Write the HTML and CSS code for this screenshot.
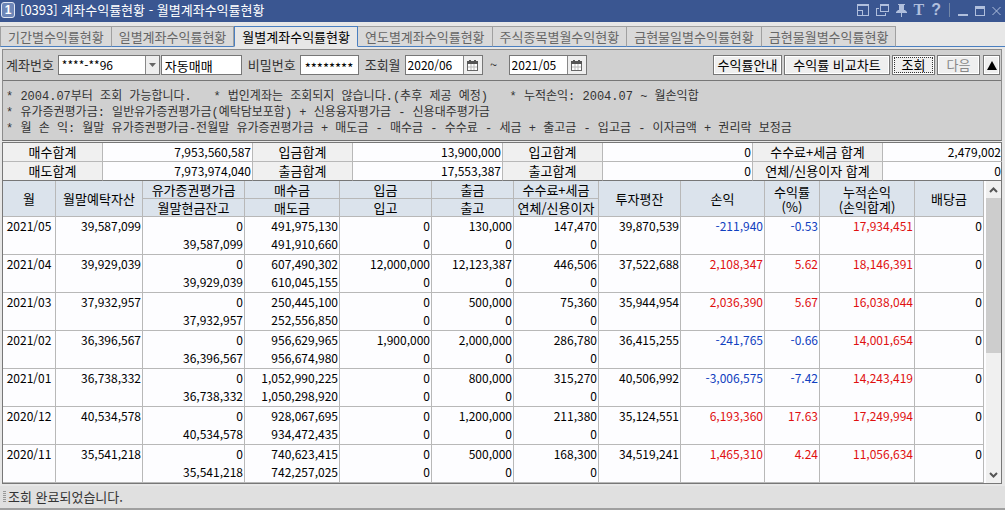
FILE: index.html
```html
<!DOCTYPE html>
<html lang="ko">
<head>
<meta charset="utf-8">
<title>[0393] 계좌수익률현황 - 월별계좌수익률현황</title>
<link rel="stylesheet" href="styles.css">
</head>
<body>
<header class="titlebar">
  <span class="badge">1</span>
  <h1 class="title">[0393] 계좌수익률현황 - 월별계좌수익률현황</h1>
  <div class="window-tools">
    <button class="tool" aria-label="크기 조절"><svg width="12" height="12" viewBox="0 0 12 12"><path d="M0 0h12v12H0zM1 2v4h5v5h5V2zM1 7v4h4V7z" fill="currentColor" fill-rule="evenodd"/></svg></button>
    <button class="tool" aria-label="창 복제"><svg width="13" height="12" viewBox="0 0 13 12"><path d="M4 0h9v8H4zM5 2v5h7V2zM0 4h3v1H1v6h8V9h1v3H0z" fill="currentColor" fill-rule="evenodd"/></svg></button>
    <button class="tool" aria-label="고정"><svg width="11" height="13" viewBox="0 0 11 13"><path d="M2 0h7v1H8v5h1l2 2v1H6v4H5V9H0V8l2-2h1V1H2z" fill="currentColor"/></svg></button>
    <button class="tool tool-text" aria-label="글꼴">T</button>
    <button class="tool tool-help" aria-label="도움말">?</button>
    <span class="tool-divider"></span>
    <button class="tool" aria-label="최소화"><svg width="10" height="13" viewBox="0 0 10 13"><path d="M0 10h10v2H0z" fill="currentColor"/></svg></button>
    <button class="tool" aria-label="최대화"><svg width="10" height="13" viewBox="0 0 10 13"><path d="M0 2h10v10H0zM1 5v6h8V5z" fill="currentColor" fill-rule="evenodd"/></svg></button>
    <button class="tool" aria-label="닫기"><svg width="9" height="13" viewBox="0 0 9 13"><path d="M.5 3l8 8M8.500 3l-8 8" fill="none" stroke="currentColor"/></svg></button>
  </div>
</header>

<nav class="tabs">
  <button class="tab">기간별수익률현황</button>
  <button class="tab">일별계좌수익률현황</button>
  <button class="tab active">월별계좌수익률현황</button>
  <button class="tab">연도별계좌수익률현황</button>
  <button class="tab">주식종목별월수익현황</button>
  <button class="tab">금현물일별수익률현황</button>
  <button class="tab">금현물월별수익률현황</button>
  <span class="tab-rest"></span>
</nav>

<main class="content">
  <section class="panel">
    <form class="filters">
      <label for="account">계좌번호</label>
      <span class="combo">
        <select id="account"><option>****-**96</option></select>
        <span class="combo-arrow"><svg width="7" height="4" viewBox="0 0 7 4"><path d="M0 0h7L3.500 4z" fill="#666"/></svg></span>
      </span>
      <input class="field name" aria-label="계좌명" value="자동매매">
      <label class="label-gap" for="password">비밀번호</label>
      <input class="field password" id="password" value="********">
      <label class="label-gap" for="from">조회월</label>
      <span class="date">
        <input id="from" value="2020/06">
        <button type="button" aria-label="시작월 선택"><svg width="11" height="11" viewBox="0 0 11 11"><path d="M0 1h2V0h2v1h3V0h2v1h2v3H0z" fill="#555"/><path d="M0 4h1v6h9V4h1v7H0z" fill="#666"/><path d="M1 4h9v6H1z" fill="#fff"/><path d="M4 4v6M7 4v6M1 7h9" stroke="#bbb"/></svg></button>
      </span>
      <span class="tilde">~</span>
      <span class="date">
        <input aria-label="종료월" value="2021/05">
        <button type="button" aria-label="종료월 선택"><svg width="11" height="11" viewBox="0 0 11 11"><path d="M0 1h2V0h2v1h3V0h2v1h2v3H0z" fill="#555"/><path d="M0 4h1v6h9V4h1v7H0z" fill="#666"/><path d="M1 4h9v6H1z" fill="#fff"/><path d="M4 4v6M7 4v6M1 7h9" stroke="#bbb"/></svg></button>
      </span>
      <span class="actions">
        <button type="button" class="btn">수익률안내</button>
        <button type="button" class="btn wide">수익률 비교차트</button>
        <button type="button" class="btn short focused">조회</button>
        <button type="button" class="btn short" disabled>다음</button>
        <button type="button" class="btn fold" aria-label="접기"><svg width="10" height="9" viewBox="0 0 10 9"><path d="M5 0l5 9H0z" fill="#000"/></svg></button>
      </span>
    </form>
    <div class="notes">
      <p>* 2004.07부터 조회 가능합니다.&nbsp;&nbsp; * 법인계좌는 조회되지 않습니다.(추후 제공 예정)&nbsp;&nbsp; * 누적손익: 2004.07 ~ 월손익합</p>
      <p>* 유가증권평가금: 일반유가증권평가금(예탁담보포함) + 신용융자평가금 - 신용대주평가금</p>
      <p>* 월 손 익: 월말 유가증권평가금-전월말 유가증권평가금 + 매도금 - 매수금 - 수수료 - 세금 + 출고금 - 입고금 - 이자금액 + 권리락 보정금</p>
    </div>
  </section>

  <section class="sheet">
    <table class="summary">
      <colgroup><col class="s1"><col class="s2"><col class="s3"><col class="s2"><col class="s3"><col class="s2"><col class="s4"><col class="s5"></colgroup>
      <tr><th>매수합계</th><td>7,953,560,587</td><th>입금합계</th><td>13,900,000</td><th>입고합계</th><td>0</td><th>수수료+세금 합계</th><td>2,479,002</td></tr>
      <tr><th>매도합계</th><td>7,973,974,040</td><th>출금합계</th><td>17,553,387</td><th>출고합계</th><td>0</td><th>연체/신용이자 합계</th><td>0</td></tr>
    </table>
    <div class="grid-area">
      <table class="grid">
        <colgroup><col class="c-month"><col class="c-asset"><col class="c-eval"><col class="c-trade"><col class="c-in"><col class="c-out"><col class="c-fee"><col class="c-avg"><col class="c-profit"><col class="c-rate"><col class="c-total"><col class="c-div"></colgroup>
        <thead>
          <tr><th rowspan="2">월</th><th rowspan="2">월말예탁자산</th><th>유가증권평가금</th><th>매수금</th><th>입금</th><th>출금</th><th>수수료+세금</th><th rowspan="2">투자평잔</th><th rowspan="2">손익</th><th class="two-line" rowspan="2">수익률<br>(%)</th><th class="two-line" rowspan="2">누적손익<br>(손익합계)</th><th rowspan="2">배당금</th></tr>
          <tr><th>월말현금잔고</th><th>매도금</th><th>입고</th><th>출고</th><th>연체/신용이자</th></tr>
        </thead>
        <tbody>
          <tr><td class="month">2021/05</td><td>39,587,099</td><td>0<br>39,587,099</td><td>491,975,130<br>491,910,660</td><td>0<br>0</td><td>130,000<br>0</td><td>147,470<br>0</td><td>39,870,539</td><td class="down">-211,940</td><td class="down">-0.53</td><td class="up">17,934,451</td><td>0</td></tr>
          <tr><td class="month">2021/04</td><td>39,929,039</td><td>0<br>39,929,039</td><td>607,490,302<br>610,045,155</td><td>12,000,000<br>0</td><td>12,123,387<br>0</td><td>446,506<br>0</td><td>37,522,688</td><td class="up">2,108,347</td><td class="up">5.62</td><td class="up">18,146,391</td><td>0</td></tr>
          <tr><td class="month">2021/03</td><td>37,932,957</td><td>0<br>37,932,957</td><td>250,445,100<br>252,556,850</td><td>0<br>0</td><td>500,000<br>0</td><td>75,360<br>0</td><td>35,944,954</td><td class="up">2,036,390</td><td class="up">5.67</td><td class="up">16,038,044</td><td>0</td></tr>
          <tr><td class="month">2021/02</td><td>36,396,567</td><td>0<br>36,396,567</td><td>956,629,965<br>956,674,980</td><td>1,900,000<br>0</td><td>2,000,000<br>0</td><td>286,780<br>0</td><td>36,415,255</td><td class="down">-241,765</td><td class="down">-0.66</td><td class="up">14,001,654</td><td>0</td></tr>
          <tr><td class="month">2021/01</td><td>36,738,332</td><td>0<br>36,738,332</td><td>1,052,990,225<br>1,050,298,920</td><td>0<br>0</td><td>800,000<br>0</td><td>315,270<br>0</td><td>40,506,992</td><td class="down">-3,006,575</td><td class="down">-7.42</td><td class="up">14,243,419</td><td>0</td></tr>
          <tr><td class="month">2020/12</td><td>40,534,578</td><td>0<br>40,534,578</td><td>928,067,695<br>934,472,435</td><td>0<br>0</td><td>1,200,000<br>0</td><td>211,380<br>0</td><td>35,124,551</td><td class="up">6,193,360</td><td class="up">17.63</td><td class="up">17,249,994</td><td>0</td></tr>
          <tr><td class="month">2020/11</td><td>35,541,218</td><td>0<br>35,541,218</td><td>740,623,415<br>742,257,025</td><td>0<br>0</td><td>500,000<br>0</td><td>168,300<br>0</td><td>34,519,241</td><td class="up">1,465,310</td><td class="up">4.24</td><td class="up">11,056,634</td><td>0</td></tr>
        </tbody>
      </table>
      <div class="scrollbar">
        <button aria-label="위로"><svg width="9" height="6" viewBox="0 0 9 6"><path d="M1 5l3.500-3.500L8 5" fill="none" stroke="#555" stroke-width="2"/></svg></button>
        <div class="track"><div class="thumb"></div></div>
        <button aria-label="아래로"><svg width="9" height="6" viewBox="0 0 9 6"><path d="M1 1l3.500 3.500L8 1" fill="none" stroke="#555" stroke-width="2"/></svg></button>
      </div>
    </div>
  </section>
</main>

<footer class="status"><span class="grip"></span>조회 완료되었습니다.</footer>
</body>
</html>
```

FILE: styles.css
```css
* { box-sizing: border-box; }

body {
  margin: 0;
  min-height: 100vh;
  display: flex;
  flex-direction: column;
  background: #e7e7e7;
  color: #333;
  font: 13px/18px "Noto Sans CJK KR", sans-serif;
}

button, input, select { font: inherit; color: inherit; margin: 0; padding: 0; border-radius: 0; }
p, h1 { margin: 0; font: inherit; }

/* Title bar */
.titlebar {
  display: flex;
  align-items: center;
  height: 22px;
  padding: 0 4px 2px 1px;
  background: #3a5691;
  color: #fff;
}
.badge {
  width: 14px;
  height: 16px;
  margin-right: 5px;
  border: 1px solid #dfe6f3;
  border-radius: 3px;
  background: #6d86b8;
  font: bold 12px/14px "Liberation Sans", sans-serif;
  text-align: center;
}
.title { white-space: nowrap; }
.window-tools {
  display: flex;
  align-items: center;
  gap: 7px;
  margin-left: auto;
  color: #b0bfdd;
}
.tool { display: flex; border: 0; background: none; }
.tool-text { font: bold 16px/16px "Liberation Serif", serif; }
.tool-help { font: bold 16px/16px "Liberation Sans", sans-serif; }
.tool-divider { width: 1px; height: 14px; margin: 0 1px; background: #7388a8; }

/* Tabs */
.tabs { display: flex; height: 21px; margin-top: 4px; }
.tab {
  padding: 0 7px;
  border: 1px solid #a0a0a0;
  border-left: 0;
  border-bottom-color: #4a7fc0;
  background: #d9d9d9;
  color: #666;
  line-height: 18px;
  white-space: nowrap;
}
.tab:first-child { border-left: 1px solid #a0a0a0; }
.tab.active {
  border-color: #4a7fc0;
  border-left: 1px solid #4a7fc0;
  border-bottom-color: #e7e7e7;
  background: #e7e7e7;
  color: #000;
}
.tab-rest { flex: 1; border-bottom: 1px solid #4a7fc0; }

.content { padding: 2px 3px 0 2px; }

/* Search conditions */
.panel { border: 1px solid #8c8c8c; border-bottom-color: #707070; background: #d0d0d0; }
.filters {
  display: flex;
  align-items: center;
  height: 31px;
  padding: 0 1px 0 3px;
  border-bottom: 1px solid #777;
  white-space: nowrap;
}
.combo { position: relative; width: 102px; height: 20px; margin-left: 4px; }
.combo select {
  width: 100%;
  height: 20px;
  padding: 0 18px 0 3px;
  border: 1px solid #777;
  background: #fff;
  color: #000;
  font-size: 12px;
  appearance: none;
}
.combo-arrow {
  position: absolute;
  inset: 1px 1px 1px auto;
  display: flex;
  align-items: center;
  justify-content: center;
  width: 14px;
  border-left: 1px solid #888;
  background: #eee;
  pointer-events: none;
}
.field { height: 20px; padding: 0 3px; border: 1px solid #777; background: #fff; color: #000; }
.name { width: 81px; margin-left: 1px; }
.label-gap { margin-left: 6px; }
.password { width: 59px; margin-left: 4px; padding: 5px 4px 0; }
.date { display: flex; width: 78px; height: 20px; margin-left: 4px; border: 1px solid #777; }
.date input { width: 57px; padding: 0 2px; border: 0; background: #fff; color: #000; font-size: 12px; }
.date button {
  display: flex;
  flex: 1;
  align-items: center;
  justify-content: center;
  border: 0;
  border-left: 1px solid #888;
  background: #eee;
}
.tilde { width: 22px; text-align: center; }
.actions { display: flex; gap: 2px; margin-left: auto; }
.btn {
  width: 69px;
  height: 20px;
  border: 1px solid #777;
  background: #efefef;
  box-shadow: inset 0 0 0 1px #fff;
  color: #000;
  line-height: 16px;
  text-align: center;
}
.wide { width: 106px; }
.short { width: 43px; }
.focused { outline: 1px dotted #333; outline-offset: -3px; }
.btn:disabled { color: #888; }
.fold { display: flex; align-items: center; justify-content: center; width: 17px; margin-left: 1px; }

.notes {
  padding: 8px 3px 3px;
  font: 12px/16px "Liberation Mono", "Noto Sans CJK KR", monospace;
}
.notes p { white-space: nowrap; }

/* Tables */
.sheet { margin-top: 1px; border: 1px solid #777; background: #fdfdff; color: #000; }
table { width: 100%; table-layout: fixed; border-collapse: separate; border-spacing: 0; }
th, td { padding: 0; font-weight: normal; white-space: nowrap; border: 0 solid #b8b8b8; }
td { padding-right: 1px; font-size: 12px; text-align: right; }

.summary th, .summary td { height: 19px; border-right-width: 1px; border-bottom-width: 1px; line-height: 18px; }
.summary th { background: #f0f0f0; }
.summary tr:last-child > * { border-bottom-color: #777; }
.summary tr > :last-child { border-right-width: 0; }
.s1 { width: 100px; }
.s2 { width: 150px; }
.s3 { width: 100px; }
.s4 { width: 130px; }
.s5 { width: 119px; }

.grid-area { display: flex; }
.grid { flex: 1; }
.grid th, .grid td { border-right-width: 1px; border-bottom-width: 1px; }
.grid th { height: 18px; background: #dbe3ec; line-height: 17px; }
.grid .two-line { line-height: 15px; }
.grid td { height: 38px; vertical-align: top; line-height: 18px; }
.grid .month { padding: 0; text-align: center; }
.down { color: #1040c0; }
.up { color: #e01010; }
.c-month { width: 53px; }
.c-asset { width: 87px; }
.c-eval { width: 102px; }
.c-trade { width: 95px; }
.c-in { width: 92px; }
.c-out { width: 82px; }
.c-fee { width: 85px; }
.c-avg { width: 82px; }
.c-profit { width: 84px; }
.c-rate { width: 55px; }
.c-total { width: 95px; }
.c-div { width: 69px; }

.scrollbar { display: flex; flex-direction: column; width: 16px; margin-left: 2px; background: #f0f0f0; }
.scrollbar button { display: flex; align-items: center; justify-content: center; height: 17px; border: 0; background: none; }
.track { flex: 1; }
.thumb { height: 58%; background: #cdcdcd; }

/* Status bar */
.status {
  display: flex;
  align-items: center;
  flex: 1;
  margin-top: 2px;
  padding-left: 3px;
  border-bottom: 2px solid #a0a0a0;
  background: #e0e0e0;
}
.grip { width: 3px; height: 12px; margin-right: 2px; background: repeating-linear-gradient(#999 0 1px, transparent 1px 2px); }
```
